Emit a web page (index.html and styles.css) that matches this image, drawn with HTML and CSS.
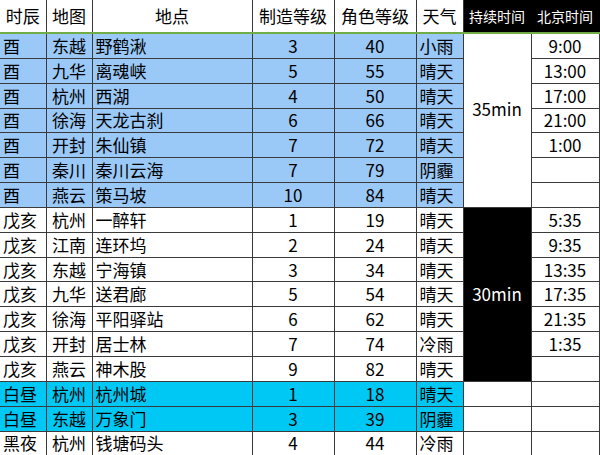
FILE: index.html
```html
<!DOCTYPE html>
<html lang="zh-CN">
<head>
<meta charset="utf-8">
<link rel="stylesheet" href="styles.css">
</head>
<body>
<table class="sheet">
  <colgroup>
    <col class="c1"><col class="c2"><col class="c3"><col class="c4"><col class="c5"><col class="c6"><col class="c7"><col class="c8">
  </colgroup>
  <thead>
    <tr class="head">
      <th>时辰</th><th>地图</th><th>地点</th><th>制造等级</th><th>角色等级</th><th>天气</th><th class="dark">持续时间</th><th class="dark">北京时间</th>
    </tr>
  </thead>
  <tbody>
    <tr class="blue"><td class="l">酉</td><td class="m">东越</td><td class="l">野鹤湫</td><td class="m">3</td><td class="m">40</td><td class="l">小雨</td><td class="dur first" rowspan="7">35min</td><td class="time">9:00</td></tr>
    <tr class="blue"><td class="l">酉</td><td class="m">九华</td><td class="l">离魂峡</td><td class="m">5</td><td class="m">55</td><td class="l">晴天</td><td class="time">13:00</td></tr>
    <tr class="blue"><td class="l">酉</td><td class="m">杭州</td><td class="l">西湖</td><td class="m">4</td><td class="m">50</td><td class="l">晴天</td><td class="time">17:00</td></tr>
    <tr class="blue"><td class="l">酉</td><td class="m">徐海</td><td class="l">天龙古刹</td><td class="m">6</td><td class="m">66</td><td class="l">晴天</td><td class="time">21:00</td></tr>
    <tr class="blue"><td class="l">酉</td><td class="m">开封</td><td class="l">朱仙镇</td><td class="m">7</td><td class="m">72</td><td class="l">晴天</td><td class="time">1:00</td></tr>
    <tr class="blue"><td class="l">酉</td><td class="m">秦川</td><td class="l">秦川云海</td><td class="m">7</td><td class="m">79</td><td class="l">阴霾</td><td class="time"></td></tr>
    <tr class="blue"><td class="l">酉</td><td class="m">燕云</td><td class="l">策马坡</td><td class="m">10</td><td class="m">84</td><td class="l">晴天</td><td class="time"></td></tr>
    <tr><td class="l">戊亥</td><td class="m">杭州</td><td class="l">一醉轩</td><td class="m">1</td><td class="m">19</td><td class="l">晴天</td><td class="dur night" rowspan="7">30min</td><td class="time">5:35</td></tr>
    <tr><td class="l">戊亥</td><td class="m">江南</td><td class="l">连环坞</td><td class="m">2</td><td class="m">24</td><td class="l">晴天</td><td class="time">9:35</td></tr>
    <tr><td class="l">戊亥</td><td class="m">东越</td><td class="l">宁海镇</td><td class="m">3</td><td class="m">34</td><td class="l">晴天</td><td class="time">13:35</td></tr>
    <tr><td class="l">戊亥</td><td class="m">九华</td><td class="l">送君廊</td><td class="m">5</td><td class="m">54</td><td class="l">晴天</td><td class="time">17:35</td></tr>
    <tr><td class="l">戊亥</td><td class="m">徐海</td><td class="l">平阳驿站</td><td class="m">6</td><td class="m">62</td><td class="l">晴天</td><td class="time">21:35</td></tr>
    <tr><td class="l">戊亥</td><td class="m">开封</td><td class="l">居士林</td><td class="m">7</td><td class="m">74</td><td class="l">冷雨</td><td class="time">1:35</td></tr>
    <tr><td class="l">戊亥</td><td class="m">燕云</td><td class="l">神木股</td><td class="m">9</td><td class="m">82</td><td class="l">晴天</td><td class="time"></td></tr>
    <tr class="cyan"><td class="l">白昼</td><td class="m">杭州</td><td class="l">杭州城</td><td class="m">1</td><td class="m">18</td><td class="l">晴天</td><td class="plain"></td><td class="time"></td></tr>
    <tr class="cyan"><td class="l">白昼</td><td class="m">东越</td><td class="l">万象门</td><td class="m">3</td><td class="m">39</td><td class="l">阴霾</td><td class="plain"></td><td class="time"></td></tr>
    <tr><td class="l">黑夜</td><td class="m">杭州</td><td class="l">钱塘码头</td><td class="m">4</td><td class="m">44</td><td class="l">冷雨</td><td class="plain"></td><td class="time"></td></tr>
  </tbody>
</table>
</body>
</html>
```
FILE: styles.css
```css
html, body {
  margin: 0;
  padding: 0;
  background: #ffffff;
}
body {
  font-family: "Noto Sans CJK SC", "Noto Sans", sans-serif;
  color: #000;
}
.sheet {
  border-collapse: collapse;
  table-layout: fixed;
  width: 599px;
}
.c1 { width: 46px; }
.c2 { width: 46px; }
.c3 { width: 160px; }
.c4 { width: 82px; }
.c5 { width: 82px; }
.c6 { width: 47px; }
.c7 { width: 68px; }
.c8 { width: 68px; }

.sheet th,
.sheet td {
  border: 1px solid #3a3a3a;
  padding: 0;
  font-size: 17px;
  line-height: 20px;
  font-weight: normal;
  white-space: nowrap;
  overflow: hidden;
  vertical-align: middle;
}
.sheet tr > :first-child {
  border-left: none;
}
.head th {
  height: 32px;
  border-top: none;
  border-bottom: 2px solid #70ad47;
  text-align: center;
}
.head th.dark {
  background: #000;
  color: #fff;
  font-size: 14px;
  border-color: #000;
  border-bottom: 2px solid #70ad47;
}
.sheet td {
  height: 23.85px;
}
.l { text-align: left; padding-left: 3px !important; }
.m { text-align: center; }
.time { text-align: center; background: #fff; }
.blue .l, .blue .m { background: #9ac8f7; }
.cyan .l, .cyan .m { background: #00c8f4; }
.dur {
  text-align: center;
  background: #fff;
}
.dur.first {
  padding-bottom: 22px !important;
}
.dur.night {
  background: #000;
  color: #fff;
}
.plain { background: #fff; }
```
